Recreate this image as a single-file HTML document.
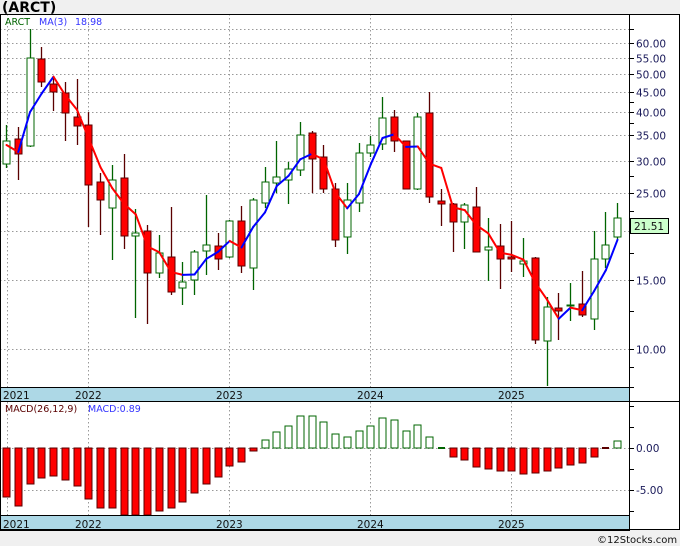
<!DOCTYPE html>
<html><head><meta charset="utf-8"><style>
body{margin:0;background:#f0f0f0;width:680px;height:546px;overflow:hidden;font-family:"DejaVu Sans",sans-serif}
svg{position:absolute;left:0;top:0}
</style></head><body>
<svg id="s" width="680" height="546" xmlns="http://www.w3.org/2000/svg" font-family="DejaVu Sans, Liberation Sans, sans-serif"></svg>
<script>
const S=document.getElementById('s');let h='';
const X=i=>6+11.75*i;
const Y=p=>742.3-170.8*Math.log(p);
const P=y=>Math.exp((742.3-y)/170.8);
h+='<rect x="0" y="14" width="680" height="516" fill="#fff"/>';
h+='<text x="2" y="12" font-size="14" font-weight="bold" fill="#000">(ARCT)</text>';
[65,60,55,50,45,40,35,30,25,20,15,10].forEach(p=>{const y=Math.round(Y(p))+.5;h+=`<line x1="0" x2="629" y1="${y}" y2="${y}" stroke="#999" stroke-dasharray="1.5,2.5"/>`;h+=`<line x1="629" x2="634" y1="${y}" y2="${y}" stroke="#000"/>`;if(p<65&&p!=20)h+=`<text x="636" y="${y+4}" font-size="10.5" fill="#1a1a5a">${p.toFixed(2)}</text>`;});
[42.5,37.5,27.5,22.5,17.5,12.5,9,8].forEach(p=>{const y=Math.round(Y(p))+.5;h+=`<line x1="629" x2="634" y1="${y}" y2="${y}" stroke="#000"/>`;});
[448,490].forEach(y=>{h+=`<line x1="0" x2="629" y1="${y+.5}" y2="${y+.5}" stroke="#999" stroke-dasharray="1.5,2.5"/><line x1="629" x2="634" y1="${y+.5}" y2="${y+.5}" stroke="#000"/>`;});
h+='<text x="636" y="452" font-size="10.5" fill="#1a1a5a">0.00</text><text x="636" y="494" font-size="10.5" fill="#1a1a5a">-5.00</text>';
[406,427,469,511].forEach(y=>{h+=`<line x1="629" x2="634" y1="${y+.5}" y2="${y+.5}" stroke="#000"/>`;});
[7,88,229,370,511].forEach(x=>{h+=`<line x1="${x+.5}" x2="${x+.5}" y1="14" y2="530" stroke="#999" stroke-dasharray="1.5,2.5"/>`;});
const C=[[141,164,125,168,1],[139,154,127,180,0],[58,146,29,147,1],[59,82,47,87,0],[84,92,77,111,0],[93,113,82,141,0],[117,126,79,145,0],[125,185,112,227,0],[182,200,173,235,0],[180,208,165,260,1],[178,236,154,249,0],[233,236,209,318,1],[231,273,225,324,0],[253,273,235,278,1],[257,292,207,295,0],[282,288,262,305,1],[252,280,250,295,1],[245,251,195,275,1],[246,259,233,270,0],[221,257,220,258,1],[221,266,206,273,0],[200,268,198,290,1],[182,203,167,208,1],[177,183,141,193,1],[169,180,162,204,1],[135,170,122,176,1],[133,159,131,193,0],[157,189,145,193,0],[189,240,183,247,0],[200,237,183,254,1],[153,203,143,212,1],[145,153,136,157,1],[118,144,97,150,1],[117,141,110,152,0],[141,189,141,189,0],[117,189,113,190,1],[113,197,92,203,0],[201,204,189,226,0],[204,222,203,252,0],[205,222,203,249,1],[207,252,187,252,0],[247,250,218,281,1],[246,259,224,289,0],[257,259,221,272,0],[261,264,238,277,1],[258,340,257,344,0],[307,341,297,386,1],[308,311,293,340,0],[305,306,283,321,1],[304,315,271,317,0],[259,319,231,330,1],[245,259,212,268,1],[218,237,203,240,1]];
C.forEach((c,i)=>{const x=Math.round(X(i));const g=c[4];const col=g?'#006400':'#5a0000';
h+=`<line x1="${x+.5}" x2="${x+.5}" y1="${c[2]}" y2="${c[3]}" stroke="${col}" stroke-width="1.3"/>`;
h+=`<rect x="${x-3}" y="${c[0]}" width="7" height="${Math.max(1,c[1]-c[0])}" fill="${g?'#fff':'#f00'}" stroke="${col}" stroke-width="1"/>`;});
const cl=C.map(c=>P(c[4]?c[0]:c[1]));const ma=[];
cl.forEach((v,i)=>{ma.push(i<2?v:(cl[i]+cl[i-1]+cl[i-2])/3);});
ma[0]=P(145);ma[1]=P(152);
for(let i=1;i<ma.length;i++){const col=ma[i]>=ma[i-1]?'#00f':'#f00';h+=`<line x1="${X(i-1)+.5}" y1="${Y(ma[i-1])}" x2="${X(i)+.5}" y2="${Y(ma[i])}" stroke="${col}" stroke-width="2" stroke-linecap="round"/>`;}
const M=[497,506,484,478,476,480,486,499,508,508,515,515,515,511,508,502,493,484,477,466,462,451,440,432,426,416,416,422,434,437,431,426,418,420,431,425,437,448,457,460,467,469,471,471,474,473,471,468,465,463,457,449,441];
M.forEach((v,i)=>{const x=Math.round(X(i));if(i==37){h+=`<rect x="${x-3}" y="447" width="7" height="2" fill="#006400"/>`;return;}if(i==51){h+=`<rect x="${x-3}" y="447" width="7" height="2" fill="#5a0000"/>`;return;}
if(v<448)h+=`<rect x="${x-3}" y="${v}" width="7" height="${448-v}" fill="#fff" stroke="#006400"/>`;else h+=`<rect x="${x-3}" y="448" width="7" height="${v-448}" fill="#f00" stroke="#5a0000"/>`;});
[[387,401],[515,530]].forEach(b=>{h+=`<rect x="0.5" y="${b[0]+.5}" width="629" height="${b[1]-b[0]}" fill="#add8e6" stroke="#000"/>`;
[[3,'2021'],[75,'2022'],[216,'2023'],[357,'2024'],[498,'2025']].forEach(t=>{h+=`<text x="${t[0]}" y="${b[1]-2}" font-size="10.5" fill="#111">${t[1]}</text>`;});});
h+='<rect x="0.5" y="14.5" width="679" height="515" fill="none" stroke="#000"/>';
h+='<line x1="629.5" x2="629.5" y1="14" y2="530" stroke="#000"/><line x1="0" x2="680" y1="401.5" y2="401.5" stroke="#000"/>';
h+='<text x="5" y="25" font-size="9.5" fill="#006400">ARCT</text><text x="39" y="25" font-size="9.5" fill="#3333ff">MA(3)</text><text x="75" y="25" font-size="9.5" fill="#3333ff">18.98</text>';
h+='<text x="5" y="412" font-size="9.5" fill="#5a0000">MACD(26,12,9)</text><text x="88" y="412" font-size="9.5" fill="#3333ff">MACD:0.89</text>';
h+='<rect x="630.5" y="218.5" width="38" height="15" fill="#ccffcc" stroke="#000"/><text x="634" y="230" font-size="10.5" fill="#111">21.51</text>';
h+='<text x="597" y="543" font-size="10" fill="#111">©12Stocks.com</text>';
S.innerHTML=h;
</script>
</body></html>
